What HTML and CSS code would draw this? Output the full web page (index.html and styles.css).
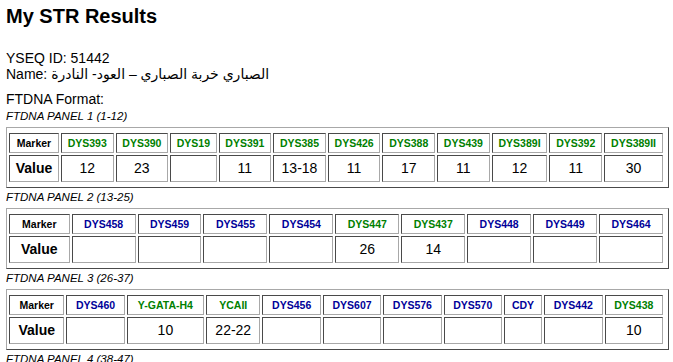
FILE: index.html
```html
<!DOCTYPE html>
<html lang="en">
<head>
	<meta charset="UTF-8" />
	<title>My STR Results</title>
	<link rel="stylesheet" href="styles.css">
</head>
<body>
	<h1>My STR Results</h1>
	<div class="info">
		<div>YSEQ ID: 51442</div>
		<div>Name: الصباري خربة الصباري – العود- النادرة</div>
	</div>
	<div class="format">FTDNA Format:</div>

	<div class="panelTitle">FTDNA PANEL 1 (1-12)</div>
	<div class="panel">
		<table>
			<tr class="markers">
				<td>Marker</td>
				<td class="core">DYS393</td><td class="core">DYS390</td><td class="core">DYS19</td>
				<td class="core">DYS391</td><td class="core">DYS385</td><td class="core">DYS426</td>
				<td class="core">DYS388</td><td class="core">DYS439</td><td class="core">DYS389I</td>
				<td class="core">DYS392</td><td class="core">DYS389II</td>
			</tr>
			<tr class="values">
				<td>Value</td>
				<td>12</td><td>23</td><td></td><td>11</td><td>13-18</td><td>11</td>
				<td>17</td><td>11</td><td>12</td><td>11</td><td>30</td>
			</tr>
		</table>
	</div>

	<div class="panelTitle">FTDNA PANEL 2 (13-25)</div>
	<div class="panel">
		<table>
			<tr class="markers">
				<td>Marker</td>
				<td class="other">DYS458</td><td class="other">DYS459</td><td class="other">DYS455</td>
				<td class="other">DYS454</td><td class="core">DYS447</td><td class="core">DYS437</td>
				<td class="other">DYS448</td><td class="other">DYS449</td><td class="other">DYS464</td>
			</tr>
			<tr class="values">
				<td>Value</td>
				<td></td><td></td><td></td><td></td><td>26</td><td>14</td>
				<td></td><td></td><td></td>
			</tr>
		</table>
	</div>

	<div class="panelTitle">FTDNA PANEL 3 (26-37)</div>
	<div class="panel">
		<table>
			<tr class="markers">
				<td>Marker</td>
				<td class="other">DYS460</td><td class="core">Y-GATA-H4</td><td class="core">YCAII</td>
				<td class="other">DYS456</td><td class="other">DYS607</td><td class="other">DYS576</td>
				<td class="other">DYS570</td><td class="other">CDY</td><td class="other">DYS442</td>
				<td class="core">DYS438</td>
			</tr>
			<tr class="values">
				<td>Value</td>
				<td></td><td>10</td><td>22-22</td><td></td><td></td><td></td>
				<td></td><td></td><td></td><td>10</td>
			</tr>
		</table>
	</div>

	<div class="panelTitle">FTDNA PANEL 4 (38-47)</div>
	<div class="panel">
		<table>
			<tr class="markers">
				<td>Marker</td>
				<td class="other">DYS531</td><td class="other">DYS578</td><td class="other">DYF395S1</td>
				<td class="other">DYS590</td><td class="other">DYS537</td><td class="other">DYS641</td>
				<td class="other">DYS472</td><td class="other">DYF406S1</td><td class="other">DYS511</td>
			</tr>
			<tr class="values">
				<td>Value</td>
				<td></td><td></td><td></td><td></td><td></td><td></td>
				<td></td><td></td><td></td>
			</tr>
		</table>
	</div>
</body>
</html>
```

FILE: styles.css
```css
body {
	margin: 0 4px 20px 6px;
	font-family: "Liberation Sans", Arial, "DejaVu Sans", sans-serif;
	font-size: 14px;
	line-height: 16px;
	color: #000;
	background-color: #fff;
}
h1 {
	margin: 4px 0 22px;
	font-size: 20px;
	line-height: 24px;
	font-weight: bold;
}
.format {
	margin-top: 9px;
}
.panelTitle {
	margin-top: 2px;
	font-size: 11.5px;
	line-height: 14px;
	font-style: italic;
}
.format + .panelTitle {
	margin-top: 2px;
}
.panel {
	margin-top: 4px;
	padding: 3px 3px 3px 0;
	border: 1px solid;
	border-color: #a8a8a8 #4a4a4a #4a4a4a #a8a8a8;
}
table {
	width: 100%;
	border-spacing: 2px;
}
td {
	padding: 2px 4px;
	text-align: center;
	border: 1px solid;
	border-color: #4a4a4a #a8a8a8 #a8a8a8 #4a4a4a;
}
.markers td {
	font-size: 10.5px;
	line-height: 14px;
	font-weight: bold;
}
.values td {
	font-size: 14px;
	line-height: 21px;
}
.values td:first-child {
	font-weight: bold;
}
.core {
	color: #008000;
}
.other {
	color: #000099;
}
```
